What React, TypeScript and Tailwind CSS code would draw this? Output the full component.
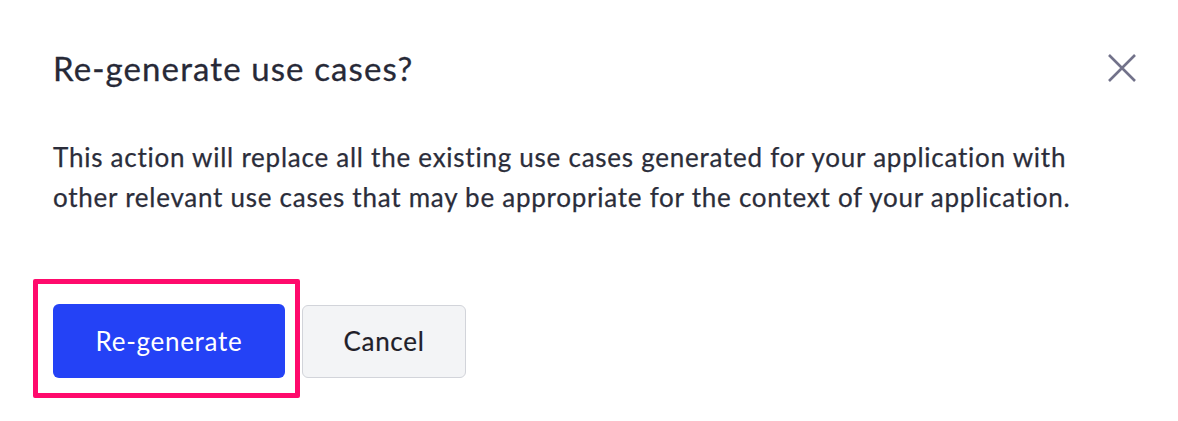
export default function App() {
  return (
    <div
      className="relative h-[421px] w-[1178px] bg-white"
      style={{ fontFamily: 'Lato, "Noto Sans", sans-serif' }}
    >
      <div className="flex flex-col px-[53px] pt-[48px]">
        <div className="flex items-start justify-between">
          <h2 className="text-[33px] leading-[40px] tracking-[1.1px] text-[#272937] [-webkit-text-stroke:0.3px_#272937]">
            Re-generate use cases?
          </h2>
          <button className="mr-[-13px] mt-[4px] text-[#72728a]">
            <svg width="32" height="32" viewBox="0 0 32 32" fill="none" stroke="currentColor" strokeWidth="2.6">
              <path d="M3 3 L29 29 M29 3 L3 29" />
            </svg>
          </button>
        </div>
        <p className="mt-[49px] text-[26px] leading-[40px] tracking-[0.75px] text-[#2b2d3a] [-webkit-text-stroke:0.25px_#2b2d3a]">
          This action will replace all the existing use cases generated for your application with
          <br />
          other relevant use cases that may be appropriate for the context of your application.
        </p>
        <div className="mt-[87px] flex items-start gap-[17px]">
          <button className="h-[74px] w-[232px] rounded-[6px] bg-[#2442f6] text-[26px] tracking-[0.7px] text-white">
            Re-generate
          </button>
          <button className="mt-[1px] h-[73px] w-[164px] rounded-[6px] border border-[#d2d4da] bg-[#f3f4f6] text-[26px] tracking-[0.7px] text-[#1f2029] [-webkit-text-stroke:0.2px_#1f2029]">
            Cancel
          </button>
        </div>
      </div>
      <div className="pointer-events-none absolute left-[33px] top-[279px] h-[119px] w-[267px] rounded-[2px] border-[5px] border-[#ff0a6c]" />
    </div>
  )
}
